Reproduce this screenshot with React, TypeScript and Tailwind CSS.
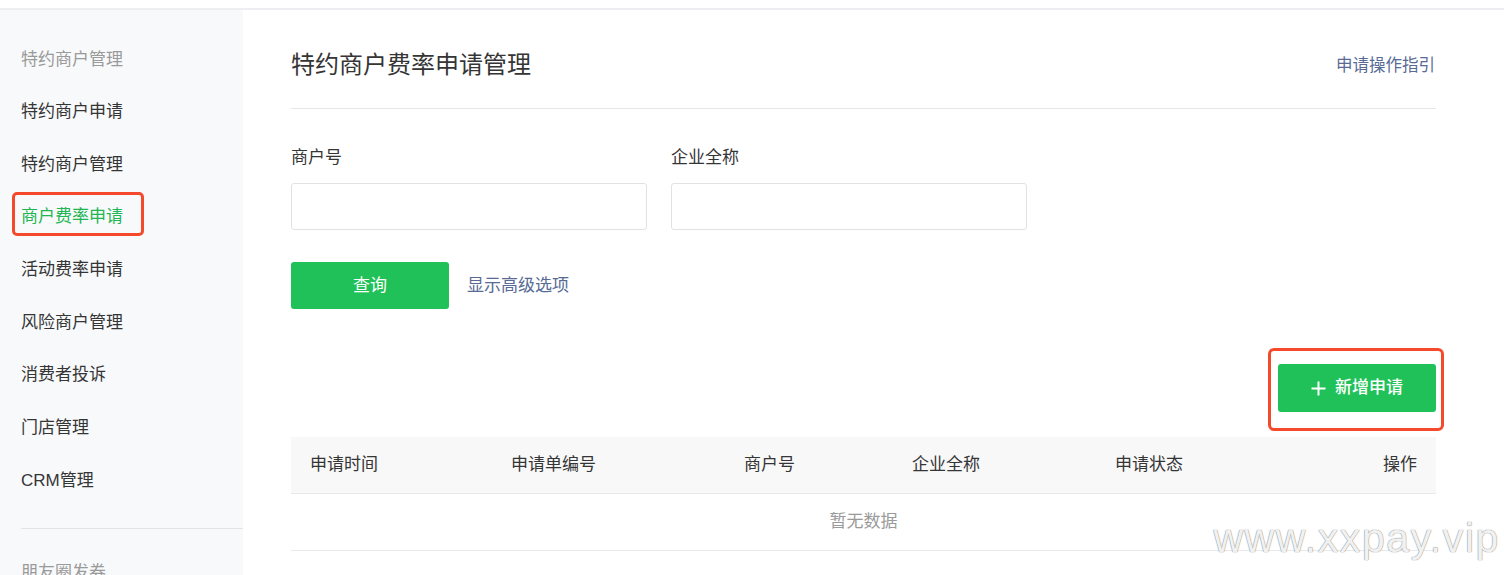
import React from "react";

const font = "font-['Liberation_Sans','Noto_Sans_CJK_SC',sans-serif]";

const menu = [
  "特约商户申请",
  "特约商户管理",
  "商户费率申请",
  "活动费率申请",
  "风险商户管理",
  "消费者投诉",
  "门店管理",
  "CRM管理",
];

const columns = ["申请时间", "申请单编号", "商户号", "企业全称", "申请状态"];

function Sidebar() {
  return (
    <aside className="w-[243px] shrink-0 bg-[#f8f9fb] pt-[23px]">
      <div className="flex h-[52.7px] items-center pl-[21px] text-[17px] text-[#9a9a9a]">
        特约商户管理
      </div>
      {menu.map((item) => {
        const active = item === "商户费率申请";
        return (
          <div
            key={item}
            className={`flex h-[52.7px] items-center pl-[21px] text-[17px] ${
              active ? "text-[#22b553]" : "text-[#353535]"
            }`}
          >
            <span className="relative leading-[24px]">
              {item}
              {active && (
                <span className="absolute -left-[9px] -right-[21px] -top-[13px] -bottom-[7px] rounded-[5px] border-[3px] border-[#f5492c]" />
              )}
            </span>
          </div>
        );
      })}
      <div className="ml-[21px] mt-[21px] border-t border-[#e3e3e3]" />
      <div className="mt-[17px] flex h-[52.7px] items-center pl-[21px] text-[17px] text-[#9a9a9a]">
        朋友圈发券
      </div>
    </aside>
  );
}

function Field({ label }: { label: string }) {
  return (
    <div className="w-[356px]">
      <div className="text-[17px] leading-[24px] text-[#353535]">{label}</div>
      <input
        type="text"
        className="mt-[13px] h-[47px] w-full rounded-[3px] border border-[#e2e2e2] bg-white px-3 outline-none"
      />
    </div>
  );
}

export default function App() {
  return (
    <div className={`relative h-[575px] w-[1504px] overflow-hidden bg-white ${font}`}>
      <div className="h-[10px] border-b-2 border-[#eeeef2] bg-white" />
      <div className="flex h-[565px]">
        <Sidebar />
        <main className="flex-1 pl-[48px] pr-[68px] pt-[40px]">
          <div className="flex items-center justify-between border-b border-[#e7e7e7] pb-[28px]">
            <h1 className="text-[24px] leading-[30px] text-[#353535]">
              特约商户费率申请管理
            </h1>
            <a className="mr-[1px] text-[16.5px] leading-[24px] text-[#576b95]">申请操作指引</a>
          </div>

          <div className="mt-[37px] flex gap-[24px]">
            <Field label="商户号" />
            <Field label="企业全称" />
          </div>

          <div className="mt-[32px] flex items-center gap-[18px]">
            <button className="h-[47px] w-[158px] rounded-[3px] bg-[#21c15a] text-[17px] text-white">
              查询
            </button>
            <a className="text-[17px] text-[#576b95]">显示高级选项</a>
          </div>

          <div className="mt-[55px] flex justify-end">
            <div className="relative">
              <button className="flex h-[48px] w-[158px] items-center justify-center gap-[9px] rounded-[3px] bg-[#21c15a] text-[17px] font-medium text-white">
                <svg width="15" height="15" viewBox="0 0 15 15" fill="none">
                  <path d="M7.5 0.5v14M0.5 7.5h14" stroke="white" strokeWidth="2" />
                </svg>
                新增申请
              </button>
              <span className="absolute -left-[10px] -right-[8px] -top-[16px] -bottom-[19px] rounded-[6px] border-[3px] border-[#f5492c]" />
            </div>
          </div>

          <div className="mt-[25px]">
            <div className="grid h-[57px] grid-cols-[201px_233px_168px_203px_1fr_120px] items-center border-b border-[#e9e9e9] bg-[#f8f8f8] text-[17px] text-[#353535]">
              {columns.map((c) => (
                <div key={c} className="pl-[19px]">
                  {c}
                </div>
              ))}
              <div className="pr-[19px] text-right">操作</div>
            </div>
            <div className="flex h-[57px] items-center justify-center border-b border-[#e9e9e9] text-[17px] text-[#9a9a9a]">
              暂无数据
            </div>
          </div>
        </main>
      </div>

      <div className="pointer-events-none absolute right-[4px] top-[518px] text-[41px] leading-none tracking-[1.6px] text-[#f1f1f1] [text-shadow:0_0_1px_#8d8d8d,0_0_1px_#8d8d8d]">
        www.xxpay.vip
      </div>
    </div>
  );
}
